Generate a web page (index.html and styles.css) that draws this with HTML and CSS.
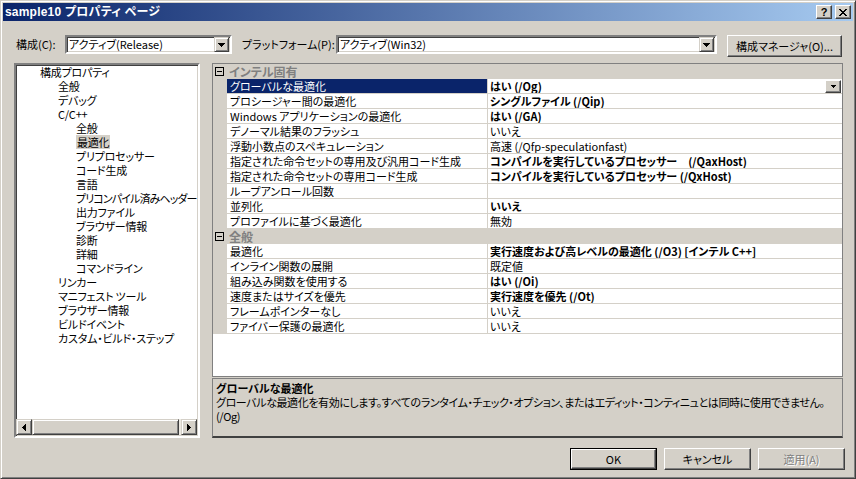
FILE: index.html
```html
<!DOCTYPE html>
<html lang="ja">
<head>
<meta charset="utf-8">
<title>sample10 プロパティ ページ</title>
<link rel="stylesheet" href="styles.css">
</head>
<body>
<div class="window">
  <div class="titlebar">
    <span class="title">sample10 プロパティ ページ</span>
    <div class="tb-buttons">
      <span class="tb-btn help">?</span>
      <span class="tb-btn"><svg width="8" height="7" viewBox="0 0 8 7"><path d="M0 0h2v1h1v1h2v-1h1v-1h2v1h-1v1h-1v1h-1v1h1v1h1v1h1v1h-2v-1h-1v-1h-2v1h-1v1h-2v-1h1v-1h1v-1h1v-1h-1v-1h-1v-1h-1z" fill="#000"/></svg></span>
    </div>
  </div>
  <div class="content">
    <div class="toolbar">
      <span class="lbl lbl1">構成(C):</span>
      <div class="combo combo1"><span class="combo-text">アクティブ(Release)</span><span class="combo-btn"><svg width="7" height="4" viewBox="0 0 7 4"><path d="M0 0h7v1h-1v1h-1v1h-1v1h-1v-1h-1v-1h-1v-1h-1z" fill="#000"/></svg></span></div>
      <span class="lbl lbl2">プラットフォーム(P):</span>
      <div class="combo combo2"><span class="combo-text">アクティブ(Win32)</span><span class="combo-btn"><svg width="7" height="4" viewBox="0 0 7 4"><path d="M0 0h7v1h-1v1h-1v1h-1v1h-1v-1h-1v-1h-1v-1h-1z" fill="#000"/></svg></span></div>
      <span class="btn cfg-btn">構成マネージャ(O)...</span>
    </div>
    <div class="main">
      <div class="tree">
        <div class="tree-list">
          <div class="ti l0">構成プロパティ</div>
          <div class="ti l1">全般</div>
          <div class="ti l1">デバッグ</div>
          <div class="ti l1">C/C++</div>
          <div class="ti l2">全般</div>
          <div class="ti l2"><span class="sel">最適化</span></div>
          <div class="ti l2">プリプロセッサー</div>
          <div class="ti l2">コード生成</div>
          <div class="ti l2">言語</div>
          <div class="ti l2 tight">プリコンパイル済みヘッダー</div>
          <div class="ti l2">出力ファイル</div>
          <div class="ti l2">ブラウザー情報</div>
          <div class="ti l2">診断</div>
          <div class="ti l2">詳細</div>
          <div class="ti l2">コマンドライン</div>
          <div class="ti l1">リンカー</div>
          <div class="ti l1">マニフェスト ツール</div>
          <div class="ti l1">ブラウザー情報</div>
          <div class="ti l1">ビルドイベント</div>
          <div class="ti l1">カスタム・ビルド・ステップ</div>
        </div>
        <div class="hscroll">
          <span class="sb-btn"><svg width="4" height="7" viewBox="0 0 4 7"><path d="M3 0h1v7h-1v-1h-1v-1h-1v-1h-1v-1h1v-1h1v-1h1z" fill="#000"/></svg></span>
          <span class="sb-thumb"></span>
          <span class="sb-track"></span>
          <span class="sb-btn"><svg width="4" height="7" viewBox="0 0 4 7"><path d="M0 0h1v1h1v1h1v1h1v1h-1v1h-1v1h-1v1h-1z" fill="#000"/></svg></span>
        </div>
      </div>
      <div class="rightpane">
        <div class="grid">
          <div class="cat"><span class="toggle"></span><span class="cat-name">インテル固有</span></div>
          <div class="row selected"><span class="mg"></span><span class="nm">グローバルな最適化</span><span class="vl b">はい (/Og)<span class="dd"><svg width="5" height="3" viewBox="0 0 5 3"><path d="M0 0h5v1h-1v1h-1v1h-1v-1h-1v-1h-1z" fill="#000"/></svg></span></span></div>
          <div class="row"><span class="mg"></span><span class="nm">プロシージャー間の最適化</span><span class="vl b">シングルファイル (/Qip)</span></div>
          <div class="row"><span class="mg"></span><span class="nm">Windows アプリケーションの最適化</span><span class="vl b">はい (/GA)</span></div>
          <div class="row"><span class="mg"></span><span class="nm">デノーマル結果のフラッシュ</span><span class="vl">いいえ</span></div>
          <div class="row"><span class="mg"></span><span class="nm">浮動小数点のスペキュレーション</span><span class="vl">高速 (/Qfp-speculationfast)</span></div>
          <div class="row"><span class="mg"></span><span class="nm">指定された命令セットの専用及び汎用コード生成</span><span class="vl b">コンパイルを実行しているプロセッサー　(/QaxHost)</span></div>
          <div class="row"><span class="mg"></span><span class="nm">指定された命令セットの専用コード生成</span><span class="vl b">コンパイルを実行しているプロセッサー (/QxHost)</span></div>
          <div class="row"><span class="mg"></span><span class="nm">ループアンロール回数</span><span class="vl"></span></div>
          <div class="row"><span class="mg"></span><span class="nm">並列化</span><span class="vl b">いいえ</span></div>
          <div class="row"><span class="mg"></span><span class="nm">プロファイルに基づく最適化</span><span class="vl">無効</span></div>
          <div class="cat"><span class="toggle"></span><span class="cat-name">全般</span></div>
          <div class="row"><span class="mg"></span><span class="nm">最適化</span><span class="vl b">実行速度および高レベルの最適化 (/O3) [インテル C++]</span></div>
          <div class="row"><span class="mg"></span><span class="nm">インライン関数の展開</span><span class="vl">既定値</span></div>
          <div class="row"><span class="mg"></span><span class="nm">組み込み関数を使用する</span><span class="vl b">はい (/Oi)</span></div>
          <div class="row"><span class="mg"></span><span class="nm">速度またはサイズを優先</span><span class="vl b">実行速度を優先 (/Ot)</span></div>
          <div class="row"><span class="mg"></span><span class="nm">フレームポインターなし</span><span class="vl">いいえ</span></div>
          <div class="row"><span class="mg"></span><span class="nm">ファイバー保護の最適化</span><span class="vl">いいえ</span></div>
        </div>
        <div class="desc">
          <div class="desc-title">グローバルな最適化</div>
          <div class="desc-text">グローバルな最適化を有効にします。すべてのランタイム・チェック・オプション、またはエディット・コンティニュとは同時に使用できません。<br>(/Og)</div>
        </div>
      </div>
    </div>
    <div class="buttons">
      <span class="btn dlg-btn default"><span class="inner">OK</span></span>
      <span class="btn dlg-btn">キャンセル</span>
      <span class="btn dlg-btn disabled">適用(A)</span>
    </div>
  </div>
</div>
</body>
</html>
```

FILE: styles.css
```css
* { box-sizing: border-box; }
html, body { margin: 0; padding: 0; }
body {
  width: 856px;
  height: 479px;
  overflow: hidden;
  background: #d4d0c8;
  font-family: "Noto Sans CJK JP", "Noto Sans", sans-serif;
  font-size: 11px;
  line-height: 14px;
  color: #000;
  font-feature-settings: "palt";
}
.window {
  width: 856px;
  height: 479px;
  border: 1px solid;
  border-color: #d4d0c8 #404040 #404040 #d4d0c8;
  box-shadow: inset 1px 1px #fff, inset -1px -1px #808080;
  padding: 2px;
  background: #d4d0c8;
  display: flex;
  flex-direction: column;
}
.titlebar {
  height: 18px;
  background: linear-gradient(to right, #0a246a, #a6caf0);
  display: flex;
  align-items: center;
  justify-content: space-between;
  padding: 0 2px 0 2px;
}
.title {
  color: #fff;
  font-family: "Liberation Sans", "Noto Sans CJK JP", sans-serif;
  font-weight: bold;
  font-size: 12px;
  letter-spacing: 0.2px;
}
.tb-buttons { display: flex; gap: 3px; }
.tb-btn {
  width: 16px;
  height: 14px;
  background: #d4d0c8;
  border: 1px solid;
  border-color: #fff #404040 #404040 #fff;
  box-shadow: inset -1px -1px #808080;
  display: flex;
  align-items: center;
  justify-content: center;
}
.tb-btn.help {
  font-family: "Liberation Sans", sans-serif;
  font-weight: bold;
  font-size: 11px;
  line-height: 12px;
}
.content {
  flex: 1;
  display: flex;
  flex-direction: column;
  padding: 14px 10px 6px 11px;
}
.toolbar {
  display: flex;
  align-items: flex-start;
  height: 22px;
}
.lbl { line-height: 19px; white-space: nowrap; }
.lbl1 { width: 51px; padding-left: 2px; }
.lbl2 { width: 94px; margin-left: 10px; }
.combo {
  height: 19px;
  background: #fff;
  border: 2px solid;
  border-color: #808080 #fff #fff #808080;
  box-shadow: inset 1px 1px #404040, inset -1px -1px #d4d0c8;
  display: flex;
  align-items: center;
  justify-content: space-between;
  padding: 0 1px 0 2px;
}
.combo1 { width: 167px; }
.combo2 { width: 381px; }
.combo-text { line-height: 15px; }
.combo-btn {
  width: 15px;
  height: 15px;
  background: #d4d0c8;
  border: 1px solid;
  border-color: #d4d0c8 #404040 #404040 #d4d0c8;
  box-shadow: inset 1px 1px #fff, inset -1px -1px #808080;
  display: flex;
  align-items: center;
  justify-content: center;
}
.btn {
  display: flex;
  align-items: center;
  justify-content: center;
  background: #d4d0c8;
  border: 1px solid;
  border-color: #fff #404040 #404040 #fff;
  box-shadow: inset -1px -1px #808080;
  white-space: nowrap;
}
.cfg-btn { width: 115px; height: 22px; margin-left: 10px; }

.main {
  display: flex;
  gap: 12px;
  margin-top: 6px;
  height: 375px;
}
.tree {
  width: 186px;
  height: 375px;
  background: #fff;
  border: 2px solid;
  border-color: #808080 #fff #fff #808080;
  box-shadow: inset 1px 1px #404040, inset -1px -1px #d4d0c8;
  display: flex;
  flex-direction: column;
  padding: 0 1px 1px 0;
}
.tree-list { flex: 1; overflow: hidden; }
.ti { height: 14px; line-height: 14px; white-space: nowrap; overflow: hidden; letter-spacing: -0.2px; }
.ti.tight { letter-spacing: -0.9px; }
.l0 { padding-left: 24px; }
.l1 { padding-left: 42px; }
.l2 { padding-left: 60px; }
.sel { background: #d4d0c8; padding: 0 1px; }
.hscroll {
  height: 16px;
  display: flex;
  background: #ece9e2;
}
.sb-btn {
  width: 16px;
  height: 16px;
  background: #d4d0c8;
  border: 1px solid;
  border-color: #d4d0c8 #404040 #404040 #d4d0c8;
  box-shadow: inset 1px 1px #fff, inset -1px -1px #808080;
  display: flex;
  align-items: center;
  justify-content: center;
}
.sb-thumb {
  width: 147px;
  height: 16px;
  background: #d4d0c8;
  border: 1px solid;
  border-color: #d4d0c8 #404040 #404040 #d4d0c8;
  box-shadow: inset 1px 1px #fff, inset -1px -1px #808080;
}
.sb-track { flex: 1; }

.rightpane {
  width: 631px;
  display: flex;
  flex-direction: column;
}
.grid {
  height: 314px;
  background: #fff;
  border: 1px solid #808080;
}
.cat {
  height: 15px;
  background: #d4d0c8;
  display: flex;
  align-items: center;
}
.toggle {
  width: 9px;
  height: 9px;
  border: 1px solid #000;
  margin-left: 2px;
  margin-right: 5px;
  position: relative;
  background: #d4d0c8;
}
.toggle::after {
  content: "";
  position: absolute;
  left: 1px;
  top: 3px;
  width: 5px;
  height: 1px;
  background: #000;
}
.cat-name { color: #808080; font-weight: bold; line-height: 15px; font-size: 12px; }
.row {
  display: grid;
  grid-template-columns: 14px 261px 1fr;
  height: 15px;
}
.mg { background: #d4d0c8; }
.nm, .vl {
  border-bottom: 1px solid #d4d0c8;
  line-height: 14px;
  white-space: nowrap;
  overflow: hidden;
}
.nm { border-right: 1px solid #d4d0c8; padding-left: 3px; }
.vl { padding-left: 2px; display: flex; align-items: center; }
.b { font-weight: bold; }
.selected .nm { background: #0a246a; color: #fff; }
.dd {
  margin-left: auto;
  margin-right: 1px;
  width: 16px;
  height: 13px;
  background: #d4d0c8;
  border: 1px solid;
  border-color: #fff #404040 #404040 #fff;
  box-shadow: inset -1px -1px #808080;
  display: flex;
  align-items: center;
  justify-content: center;
}
.desc {
  margin-top: 1px;
  flex: 1;
  border-top: 1px solid #808080;
  border-left: 1px solid #808080;
  border-bottom: 2px solid #404040;
  border-right: 1px solid #808080;
  padding: 2px 3px 0 3px;
  overflow: hidden;
}
.desc-title { font-weight: bold; }
.desc-text { white-space: nowrap; letter-spacing: -0.4px; }
.buttons {
  display: flex;
  justify-content: flex-end;
  gap: 7px;
  margin-top: 10px;
  margin-right: -2px;
}
.dlg-btn { width: 87px; height: 22px; }
.dlg-btn.default {
  border: 1px solid #000;
  box-shadow: none;
  padding: 0;
}
.dlg-btn.default .inner {
  width: 100%;
  height: 100%;
  display: flex;
  align-items: center;
  justify-content: center;
  border: 1px solid;
  border-color: #fff #404040 #404040 #fff;
  box-shadow: inset -1px -1px #808080;
}
.dlg-btn.disabled { color: #808080; text-shadow: 1px 1px #fff; }
```
